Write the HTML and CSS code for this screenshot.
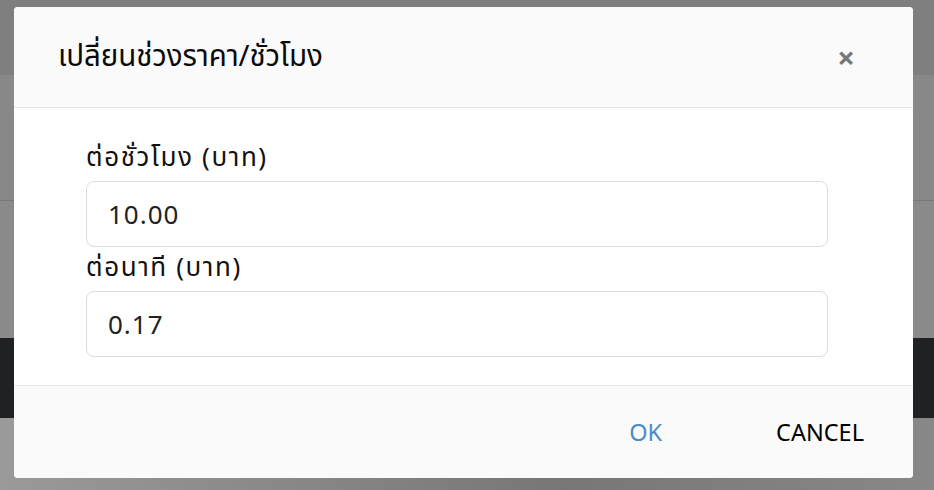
FILE: index.html
```html
<!DOCTYPE html>
<html lang="th">
<head>
<meta charset="utf-8">
<link rel="stylesheet" href="styles.css">
</head>
<body>
<div class="backdrop">
  <div class="bg-top"></div>
  <div class="bg-mid"></div>
  <div class="bg-low"></div>
  <div class="bg-dark"></div>
  <div class="bg-bottom"></div>
</div>
<div class="modal">
  <div class="modal-header">
    <h2 class="modal-title">เปลี่ยนช่วงราคา/ชั่วโมง</h2>
    <span class="close">&times;</span>
  </div>
  <div class="modal-body">
    <label class="field-label">ต่อชั่วโมง (บาท)</label>
    <div class="field-input">10.00</div>
    <label class="field-label">ต่อนาที (บาท)</label>
    <div class="field-input">0.17</div>
  </div>
  <div class="modal-footer">
    <button class="btn btn-ok">OK</button>
    <button class="btn btn-cancel">CANCEL</button>
  </div>
</div>
</body>
</html>
```
FILE: styles.css
```css
html, body {
  margin: 0;
  padding: 0;
  width: 934px;
  height: 490px;
  overflow: hidden;
  font-family: "Noto Sans", "Noto Sans Thai", "Open Sans", sans-serif;
}
.backdrop {
  display: flex;
  flex-direction: column;
  height: 490px;
  background: #888;
}
.bg-top { height: 75px; background: #7f7f7f; }
.bg-mid { height: 125px; background: #888; border-bottom: 1px solid #777; }
.bg-low { height: 137px; background: #8a8a8a; }
.bg-dark { height: 80px; background: #202122; }
.bg-bottom { flex: 1; background: linear-gradient(90deg, #9a9a9a, #777 60%, #888); }
.modal {
  position: absolute;
  left: 14px;
  top: 7px;
  width: 899px;
  height: 471px;
  background: #fff;
  border-radius: 4px;
  overflow: hidden;
  display: flex;
  flex-direction: column;
}
.modal-header {
  height: 100px;
  flex: none;
  background: #fafafa;
  border-bottom: 1px solid #e8e8e8;
  display: flex;
  align-items: center;
  justify-content: space-between;
  padding: 0 58px 0 44px;
}
.modal-title {
  margin: 0;
  font-family: "Noto Sans Thai", "Noto Sans", sans-serif;
  font-size: 29.5px;
  font-weight: 400;
  color: #0a0a0a;
  letter-spacing: -0.1px;
  line-height: 40px;
}
.close {
  font-size: 31px;
  color: #777;
  font-weight: 700;
  line-height: 1;
}
.modal-body {
  height: 277px;
  flex: none;
  padding: 35px 85px 0 72px;
  box-sizing: border-box;
  display: flex;
  flex-direction: column;
}
.field-label {
  font-family: "Noto Sans Thai", "Noto Sans", sans-serif;
  font-size: 26px;
  letter-spacing: 1.6px;
  color: #111;
  line-height: 30px;
  height: 30px;
  margin-bottom: 8px;
}
.field-input {
  height: 66px;
  box-sizing: border-box;
  flex: none;
  border: 1px solid #ddd;
  border-radius: 8px;
  font-size: 26px;
  letter-spacing: 1px;
  color: #222;
  display: flex;
  align-items: center;
  padding-left: 21px;
  margin-bottom: 6px;
}
.modal-footer {
  flex: 1;
  background: #fafafa;
  border-top: 1px solid #e8e8e8;
  display: flex;
  align-items: center;
  justify-content: flex-end;
  padding-right: 49px;
  gap: 114px;
}
.btn {
  background: none;
  border: 0;
  padding: 0;
  font-family: "Noto Sans", "Open Sans", sans-serif;
  font-size: 23.5px;
}
.btn-ok { color: #4a8cc7; }
.btn-cancel { color: #000; }
```
